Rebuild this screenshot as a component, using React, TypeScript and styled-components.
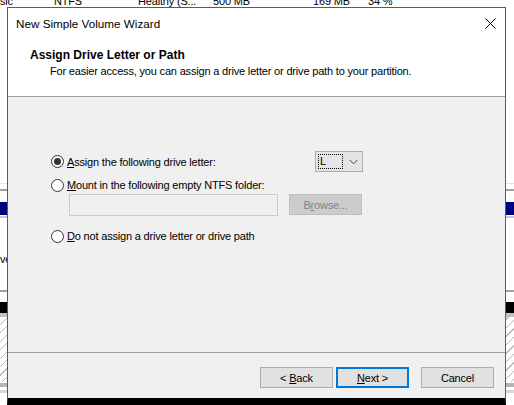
import React from "react";
import styled, { createGlobalStyle } from "styled-components";

const Global = createGlobalStyle`
  html, body { margin: 0; padding: 0; width: 514px; height: 405px; overflow: hidden; background: #fff; }
  body { font-family: "Liberation Sans", Arial, sans-serif; }
`;

const Screen = styled.div`
  position: relative;
  width: 514px;
  height: 405px;
  overflow: hidden;
  background: #fff;
  font-family: "Liberation Sans", Arial, sans-serif;
  font-size: 11px;
  letter-spacing: -0.18px;
  color: #000;
`;

/* ---------- background window (Disk Management) ---------- */
const Backdrop = styled.div`
  display: flex;
  flex-direction: column;
  width: 100%;
  height: 100%;
`;

const ListRow = styled.div`
  height: 7px;
  flex: none;
  overflow: hidden;
`;

const ListCells = styled.div`
  display: grid;
  grid-template-columns: 54px 84px 75px 100px 55px auto;
  margin-top: -5px;
  line-height: 12px;
  white-space: nowrap;
`;

const Gap = styled.div<{ $h: number }>`
  flex: none;
  height: ${(p) => p.$h}px;
`;

const Band = styled.div<{ $h: number; $c: string }>`
  flex: none;
  height: ${(p) => p.$h}px;
  background: ${(p) => p.$c};
`;

const Hatch = styled.div<{ $h: number }>`
  flex: none;
  height: ${(p) => p.$h}px;
  background: repeating-linear-gradient(135deg, #ffffff 0 5px, #b8b8b8 5px 6px);
`;

const BackText = styled.div`
  flex: none;
  height: 12px;
  line-height: 12px;
  white-space: nowrap;
`;

/* ---------- dialog ---------- */
const Dialog = styled.div`
  position: absolute;
  left: 7px;
  top: 7px;
  width: 499px;
  height: 398px;
  box-sizing: border-box;
  border: 1px solid #5a5a5a;
  border-bottom: 7px solid #000;
  background: #f0f0f0;
  display: flex;
  flex-direction: column;
`;

const TitleBar = styled.div`
  flex: none;
  height: 30px;
  background: #fff;
  display: flex;
  align-items: center;
  justify-content: space-between;
  padding-left: 8px;
`;

const Title = styled.span`
  font-size: 11.7px;
  letter-spacing: 0;
`;

const CloseButton = styled.div`
  width: 30px;
  height: 30px;
  display: flex;
  align-items: center;
  justify-content: center;
`;

const Header = styled.div`
  flex: none;
  background: #fff;
  border-bottom: 1px solid #a0a0a0;
  padding: 10px 0 0 22px;
  height: 48px;
  display: flex;
  flex-direction: column;
`;

const HeaderTitle = styled.div`
  font-weight: bold;
  font-size: 12px;
  letter-spacing: 0;
  line-height: 14px;
`;

const HeaderSub = styled.div`
  margin-top: 2px;
  padding-left: 20px;
  line-height: 14px;
`;

const Body = styled.div`
  flex: none;
  height: 201px;
  padding: 54px 0 0 43px;
  border-bottom: 1px solid #a0a0a0;
  display: flex;
  flex-direction: column;
`;

const OptionRow = styled.div<{ $top?: number; $h?: number }>`
  display: grid;
  grid-template-columns: 264px auto;
  align-items: center;
  height: ${(p) => p.$h ?? 18}px;
  margin-top: ${(p) => p.$top ?? 0}px;
`;

const RadioLabel = styled.label`
  display: flex;
  align-items: center;
  gap: 3px;
  white-space: nowrap;
`;

const RadioCircle = styled.span<{ $checked?: boolean }>`
  position: relative;
  width: 13px;
  height: 13px;
  box-sizing: border-box;
  border-radius: 50%;
  border: 1px solid #333;
  background: #fff;
  flex: none;
  &::after {
    content: "";
    display: ${(p) => (p.$checked ? "block" : "none")};
    position: absolute;
    left: 2px;
    top: 2px;
    width: 7px;
    height: 7px;
    border-radius: 50%;
    background: #333;
  }
`;

const U = styled.span`
  text-decoration: underline;
  text-underline-offset: 1px;
`;

const Combo = styled.div`
  width: 48px;
  height: 21px;
  box-sizing: border-box;
  border: 1px solid #acacac;
  background: #e5e5e5;
  display: flex;
  align-items: center;
  padding-left: 2px;
  gap: 6px;
`;

const FocusBox = styled.div`
  width: 25px;
  height: 15px;
  box-sizing: border-box;
  border: 1px dotted #000;
  line-height: 13px;
  padding-left: 1px;
`;

const FolderRow = styled.div`
  display: flex;
  align-items: flex-start;
  gap: 11px;
  margin-left: 18px;
  height: 22px;
`;

const FolderInput = styled.div`
  width: 209px;
  height: 22px;
  box-sizing: border-box;
  border: 1px solid #cccccc;
  background: #f0f0f0;
`;

const Button = styled.div<{ $default?: boolean; $disabled?: boolean }>`
  width: 73px;
  height: 21px;
  box-sizing: border-box;
  border: ${(p) => (p.$default ? "2px solid #0078d7" : p.$disabled ? "1px solid #bfbfbf" : "1px solid #adadad")};
  background: ${(p) => (p.$disabled ? "#cccccc" : "#e1e1e1")};
  color: ${(p) => (p.$disabled ? "#838383" : "#000")};
  display: flex;
  align-items: center;
  justify-content: center;
  white-space: pre;
`;

const Footer = styled.div`
  flex: 1;
  display: flex;
  justify-content: flex-end;
  align-items: flex-start;
  padding: 14px 11px 0 0;
`;

const ButtonGap = styled.div<{ $w: number }>`
  width: ${(p) => p.$w}px;
`;

export default function App() {
  return (
    <>
      <Global />
      <Screen>
        <Backdrop>
          <ListRow>
            <ListCells>
              <span>sic</span>
              <span>NTFS</span>
              <span>Healthy (S...</span>
              <span>500 MB</span>
              <span>169 MB</span>
              <span>34 %</span>
            </ListCells>
          </ListRow>
          <Gap $h={176} />
          <Band $h={1} $c="#e3e3e3" />
          <Gap $h={5} />
          <Band $h={2} $c="#a0a0a0" />
          <Gap $h={11} />
          <Band $h={13} $c="#00007f" />
          <Gap $h={1} />
          <Band $h={2} $c="#c8c8c8" />
          <Gap $h={35} />
          <BackText>ve</BackText>
          <Gap $h={25} />
          <Band $h={2} $c="#a0a0a0" />
          <Gap $h={10} />
          <Band $h={11} $c="#000" />
          <Band $h={4} $c="#c0c0c0" />
          <Hatch $h={65} />
          <Gap $h={1} />
          <Band $h={4} $c="#b4b4b4" />
          <Gap $h={3} />
          <Band $h={3} $c="#d8d8d8" />
        </Backdrop>

        <Dialog>
          <TitleBar>
            <Title>New Simple Volume Wizard</Title>
            <CloseButton>
              <svg width="11" height="11" viewBox="0 0 11 11">
                <path d="M0.5 0.5 L10.5 10.5 M10.5 0.5 L0.5 10.5" stroke="#000" strokeWidth="1" fill="none" />
              </svg>
            </CloseButton>
          </TitleBar>
          <Header>
            <HeaderTitle>Assign Drive Letter or Path</HeaderTitle>
            <HeaderSub>For easier access, you can assign a drive letter or drive path to your partition.</HeaderSub>
          </Header>
          <Body>
            <OptionRow $h={21}>
              <RadioLabel>
                <RadioCircle $checked />
                <span>
                  <U>A</U>ssign the following drive letter:
                </span>
              </RadioLabel>
              <Combo>
                <FocusBox>L</FocusBox>
                <svg width="9" height="6" viewBox="0 0 9 6">
                  <path d="M0.5 0.8 L4.5 4.8 L8.5 0.8" stroke="#444" strokeWidth="1" fill="none" />
                </svg>
              </Combo>
            </OptionRow>
            <OptionRow $top={4}>
              <RadioLabel>
                <RadioCircle />
                <span>
                  <U>M</U>ount in the following empty NTFS folder:
                </span>
              </RadioLabel>
            </OptionRow>
            <FolderRow>
              <FolderInput />
              <Button $disabled>
                <span>
                  B<U>r</U>owse...
                </span>
              </Button>
            </FolderRow>
            <OptionRow $top={11}>
              <RadioLabel>
                <RadioCircle />
                <span>
                  <U>D</U>o not assign a drive letter or drive path
                </span>
              </RadioLabel>
            </OptionRow>
          </Body>
          <Footer>
            <Button>
              <span>
                {"< "}
                <U>B</U>ack
              </span>
            </Button>
            <ButtonGap $w={3} />
            <Button $default>
              <span>
                <U>N</U>
                {"ext >"}
              </span>
            </Button>
            <ButtonGap $w={12} />
            <Button>
              <span>Cancel</span>
            </Button>
          </Footer>
        </Dialog>
      </Screen>
    </>
  );
}
